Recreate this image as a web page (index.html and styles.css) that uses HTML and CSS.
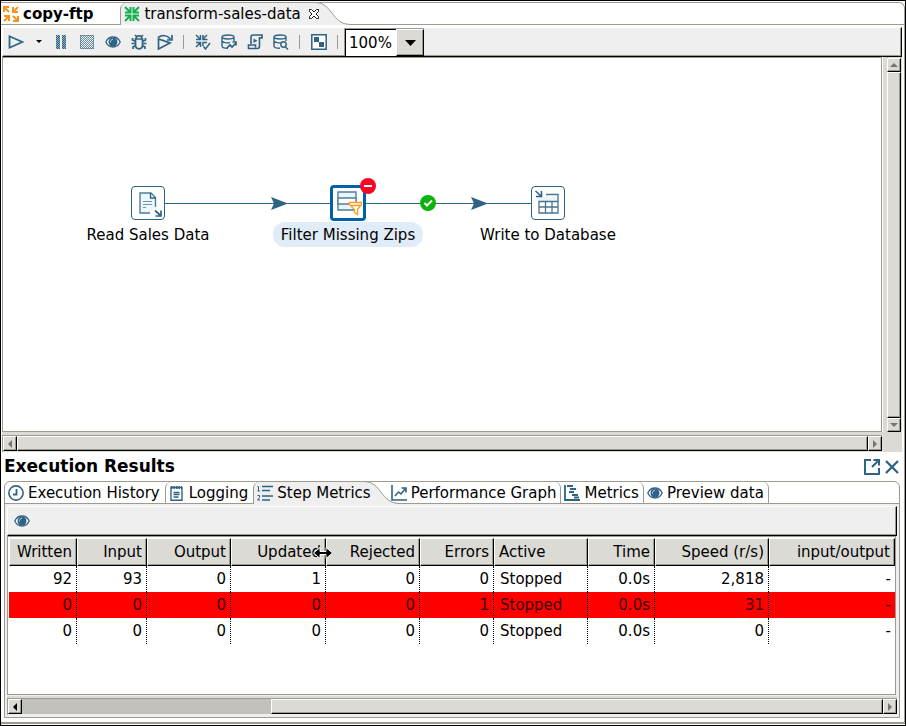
FILE: index.html
```html
<!DOCTYPE html>
<html lang="en">
<head>
<meta charset="utf-8">
<title>transform-sales-data</title>
<link rel="stylesheet" href="styles.css">
</head>
<body>
<svg class="defs" aria-hidden="true">
  <defs>
    <pattern id="dither" width="2" height="2" patternUnits="userSpaceOnUse"><path fill="#2f6383" d="M0 0h1v1H0zM1 1h1v1H1z"/></pattern>
    <symbol id="eye" viewBox="0 0 16 16"><path fill="#fff" stroke="#2f6383" stroke-width="1.300" d="M.8 8C2.500 4.500 5 3 8 3s5.500 1.500 7.200 5C13.500 11.500 11 13 8 13S2.500 11.500.8 8z"/><circle cx="8" cy="8" r="4.500" fill="#2f6383"/><path fill="none" stroke="#b9d3e0" d="M5.500 8.500C5.500 6.500 6.200 5.500 8 5.200"/></symbol>
    <symbol id="in-arrows" viewBox="0 0 16 16"><path fill="none" stroke="currentColor" stroke-width="2" d="M1 1l5 5M15 1l-5 5M1 15l5-5M15 15l-5-5M6.500 1v5.500H1M9.500 1v5.500H15M1 9.500h5.500V15M15 9.500H9.500V15"/></symbol>
    <symbol id="cylinder" viewBox="0 0 16 16"><path fill="none" stroke="#2f6383" stroke-width="1.400" d="M1 3v9c0 1.500 2.500 2.200 6 2.200M13 7V3M1 7.300c1 1.300 4 1.800 8 1.300M1 3c0-1.300 2.500-2 6-2s6 .7 6 2-2.500 2-6 2-6-.7-6-2z"/></symbol>
    <symbol id="left" viewBox="0 0 12 12"><path fill="currentColor" d="M8 2v8L4 6z"/></symbol>
    <symbol id="right" viewBox="0 0 12 12"><path fill="currentColor" d="M4 2v8l4-4z"/></symbol>
    <symbol id="up" viewBox="0 0 12 12"><path fill="currentColor" d="M2 8h8L6 4z"/></symbol>
    <symbol id="down" viewBox="0 0 12 12"><path fill="currentColor" d="M2 4h8L6 8z"/></symbol>
    <symbol id="curve" viewBox="0 0 36 23"><path fill="#efefef" d="M0 .5h2C18 .5 18 22.500 36 22.500V23H0z"/><path fill="none" stroke="#9e9a90" d="M0 .5h2C18 .5 18 22.500 36 22.500"/></symbol>
  </defs>
</svg>
<div class="window">
  <div class="tabs file-tabs" role="tablist">
    <button class="tab file" role="tab"><svg class="icon orange" viewBox="0 0 16 16"><path fill="none" stroke="currentColor" stroke-width="2" d="M1 6V1h5M1 1l5 5M10 1v5h5M15 1l-5 5M6 15v-5H1M1 15l5-5M15 10v5h-5M15 15l-5-5"/></svg>copy-ftp</button>
    <button class="tab selected left-edge" role="tab" aria-selected="true"><svg class="icon green"><use href="#in-arrows"/></svg>transform-sales-data<svg class="close" viewBox="0 0 12 12"><path fill="#fff" stroke="#222" d="M1.500 1.500h2L6 4l2.500-2.500h2v2L8 6l2.500 2.500v2h-2L6 8l-2.500 2.500h-2v-2L4 6 1.500 3.500z"/></svg></button>
    <svg class="curve"><use href="#curve"/></svg>
  </div>
  <div class="toolbar" role="toolbar">
    <button class="tool" aria-label="Run"><svg class="icon" viewBox="0 0 16 16"><path fill="none" stroke="#2f6383" stroke-width="1.800" d="M1.500 2.300v11.400L14.500 8z"/></svg></button>
    <button class="tool menu" aria-label="Run options"><svg class="icon" viewBox="0 0 16 16"><path d="M5 6h6L8 9z"/></svg></button>
    <button class="tool" aria-label="Pause"><svg class="icon" viewBox="0 0 16 16"><path fill="#93abb9" d="M3 1h4v14H3zM9 1h4v14H9z"/><path fill="url(#dither)" d="M3 1h4v14H3zM9 1h4v14H9z"/></svg></button>
    <button class="tool" aria-label="Stop"><svg class="icon" viewBox="0 0 16 16"><path fill="url(#dither)" opacity=".7" d="M1 1h14v14H1z"/><path fill="none" stroke="#2f6383" stroke-dasharray="1 1" d="M1.500 1.500h13v13h-13z"/></svg></button>
    <button class="tool" aria-label="Preview"><svg class="icon"><use href="#eye"/></svg></button>
    <button class="tool" aria-label="Debug"><svg class="icon" viewBox="0 0 16 16"><g fill="none" stroke="#2f6383" stroke-width="1.700"><path d="M4.500 5h7v6c0 2.500-1.500 3.800-3.500 3.800S4.500 13.500 4.500 11zM5.200 5C5 2.500 6.500 1.800 8 1.800S11 2.500 10.800 5M4 1l2 2M12 1l-2 2M4.500 7.500L1.500 6V4M11.500 7.500l3-1.500V4M4.500 9.500H.5M11.500 9.500h4M4.700 11.500L2 13v2M11.300 11.500L14 13v2"/></g></svg></button>
    <button class="tool" aria-label="Replay"><svg class="icon" viewBox="0 0 16 16"><path fill="none" stroke="#2f6383" stroke-width="1.700" d="M1.500 5v10L13 9zM1 3.500C5 .8 10 1 13.500 5M15 1v5h-5"/></svg></button>
    <span class="separator"></span>
    <button class="tool" aria-label="Verify"><svg class="icon" viewBox="0 0 16 16"><path fill="none" stroke="#2f6383" stroke-width="1.500" d="M1 1l4 4M12 1L8 5M1 13l4-4M5.500 1v4.500H1M8 1v4.500h4.500M1 8.500h4.500V13M8 12V8.500h4M8.500 12.500l2 2.500 4.500-6"/></svg></button>
    <button class="tool" aria-label="Impact"><svg class="icon" viewBox="0 0 16 16"><use href="#cylinder"/><path fill="none" stroke="#2f6383" stroke-width="1.700" d="M6 14l3-3 2 2 4-4M11.500 8H15v3.500"/></svg></button>
    <button class="tool" aria-label="SQL"><svg class="icon" viewBox="0 0 16 16"><path fill="none" stroke="#2f6383" stroke-width="1.600" d="M4 10V3c0-1.300.6-2 2-2h9v3h-2.500M12.500 3v9c0 1.800-.8 2.500-2 2.500H1.500V11h7v2.500"/><path fill="#2f6383" d="M6.500 4.500v4.500l4-2.300z"/></svg></button>
    <button class="tool" aria-label="Explore database"><svg class="icon" viewBox="0 0 16 16"><use href="#cylinder"/><path fill="none" stroke="#2f6383" stroke-width="1.500" d="M12.500 13l2.500 2.500"/><circle cx="10.500" cy="10.500" r="2.700" fill="#efefef" stroke="#2f6383" stroke-width="1.400"/></svg></button>
    <span class="separator"></span>
    <button class="tool" aria-label="Show results"><svg class="icon" viewBox="0 0 16 16"><path fill="#fff" stroke="#2f6383" stroke-width="1.500" d="M.8.8h14.400v14.400H.8z"/><path fill="#2f6383" d="M3 3h5v5H3zM8 8h5v5H8z"/></svg></button>
    <span class="separator"></span>
    <span class="combo"><select aria-label="Zoom"><option>100%</option></select><span class="drop"><svg viewBox="0 0 12 12"><path d="M1 3h11L6.500 9z"/></svg></span></span>
  </div>
  <div class="editor">
    <main class="canvas">
      <svg class="links"><path stroke="#2f6383" d="M162 145.500h166M362 145.500h166"/><path fill="#2f6383" d="M268 139l17 6.500-17 6.500 3-6.500zM468 139l17 6.500-17 6.500 3-6.500z"/><circle cx="425" cy="145" r="8" fill="#0ab40a"/><path fill="none" stroke="#fff" stroke-width="2" d="M421.500 145l2.500 2.500 5-5"/></svg>
      <div class="node read"><div class="box"><svg viewBox="0 0 32 32"><path fill="#edf7fb" stroke="#4c7d9a" stroke-width="1.400" d="M18 26H8V6h11l4.500 4.500V20"/><path fill="none" stroke="#2f6383" stroke-width="1.300" d="M18.500 6v5H24"/><path stroke="#6d98ae" d="M11 14.500h9M11 17.500h9M11 20.500h3"/><path fill="none" stroke="#2f6383" stroke-width="1.700" d="M23 23.500l5.500 5M29 23.500v5.500h-5.500"/></svg></div><span class="label">Read Sales Data</span></div>
      <div class="node filter"><div class="box active"><svg viewBox="0 0 32 32"><path fill="#e9f5fa" stroke="#527f9a" stroke-width="1.400" d="M6 5h18v18H6z"/><path fill="#fff" stroke="#527f9a" stroke-width="1.300" d="M6 11h18v6H6z"/><path fill="#fff" stroke="#f99d1c" stroke-width="1.300" d="M17.500 15.500h12v2l-4 5v5l-3-2v-3l-5-5zM19 18.500h9"/></svg></div><svg class="badge" viewBox="0 0 16 16"><circle cx="8" cy="8" r="8" fill="#ff0026"/><path stroke="#fff" stroke-width="2" d="M4 8h8"/></svg><span class="label">Filter Missing Zips</span></div>
      <div class="node write"><div class="box"><svg viewBox="0 0 32 32"><path fill="#e9f5fa" d="M7 10h19v5H7z"/><path fill="none" stroke="#47758f" stroke-width="1.300" d="M14 7.500h12V26H7V14.500h19M7 20h19M13.500 15v11M20 15v11"/><path fill="none" stroke="#2f6383" stroke-width="1.600" d="M3.500 4l5.500 5M9.500 4v5.500H4"/></svg></div><span class="label">Write to Database</span></div>
    </main>
    <div class="scrollbar vertical"><button class="step" aria-label="Scroll up"><svg><use href="#up"/></svg></button><div class="thumb"></div><button class="step" aria-label="Scroll down"><svg><use href="#down"/></svg></button></div>
    <div class="scrollbar horizontal"><button class="step" aria-label="Scroll left"><svg><use href="#left"/></svg></button><div class="thumb"></div><button class="step" aria-label="Scroll right"><svg><use href="#right"/></svg></button></div>
    <div class="corner"></div>
  </div>
  <section class="results">
    <header class="heading"><h2>Execution Results</h2>
      <button class="action" aria-label="Maximize"><svg class="icon" viewBox="0 0 16 16"><path fill="none" stroke="#2f6383" stroke-width="2" d="M7 1H1v14h14V9M8 8l6.500-6.500M9.500 1H15v5.500"/></svg></button>
      <button class="action" aria-label="Close"><svg class="icon" viewBox="0 0 16 16"><path stroke="#2f6383" stroke-width="2.300" d="M2 2l12 12M14 2L2 14"/></svg></button>
    </header>
    <div class="folder">
      <div class="tabs" role="tablist">
        <button class="tab" role="tab"><svg class="icon" viewBox="0 0 16 16"><circle cx="8" cy="8" r="7.100" fill="none" stroke="#2f6383" stroke-width="1.600"/><path fill="none" stroke="#2f6383" stroke-width="1.800" d="M8.500 4v5.500H5"/></svg>Execution History</button>
        <button class="tab left-edge" role="tab"><svg class="icon" viewBox="0 0 16 16"><path fill="none" stroke="#2f6383" stroke-width="1.400" d="M2 2.500h11v12.700H2zM4.500 7.500h6M4.500 9.500h6M4.500 12h5"/><path stroke="#2f6383" stroke-width="3" stroke-dasharray="1.500 1" d="M2 2.500h11"/></svg>Logging</button>
        <button class="tab selected left-edge" role="tab" aria-selected="true"><svg class="icon" viewBox="0 0 16 16"><path fill="none" stroke="#2f6383" d="M.5 1.500h1V6M.5 6h2.500M.5 10.500h2v2l-2 2.500H3"/><path stroke="#2f6383" stroke-width="1.300" d="M5 1.500h11M5 5.500h8M5 11h11M5 15h8"/></svg>Step Metrics</button>
        <svg class="curve"><use href="#curve"/></svg>
        <button class="tab right-edge after-curve" role="tab"><svg class="icon" viewBox="0 0 16 16"><path fill="none" stroke="#2f6383" stroke-width="1.600" d="M1 0v15h15M4 11l3.500-4 2.500 2 4-5M10.500 3H15v4.500"/></svg>Performance Graph</button>
        <button class="tab right-edge" role="tab"><svg class="icon" viewBox="0 0 16 16"><path fill="none" stroke="#2f6383" stroke-width="1.800" d="M1 0v15h15M3 1h6M6 4h6M5 7h5M8 10h6M10 12.500h5"/></svg>Metrics</button>
        <button class="tab right-edge" role="tab"><svg class="icon"><use href="#eye"/></svg>Preview data</button>
      </div>
      <div class="content">
        <div class="toolbar"><button class="tool preview" aria-label="Preview rows"><svg class="icon"><use href="#eye"/></svg></button></div>
        <div class="grid">
          <table>
            <colgroup><col class="w68"><col class="w70"><col class="w84"><col class="w95"><col class="w94"><col class="w74"><col class="w94"><col class="w67"><col class="w114"><col></colgroup>
            <thead><tr><th>Written</th><th>Input</th><th>Output</th><th class="resizing">Updated<svg class="cursor" viewBox="0 0 20 12"><path stroke="#fff" stroke-width="1" d="M.5 6L7 .5v4h6v-4L19.500 6 13 11.500v-4H7v4z"/></svg></th><th>Rejected</th><th>Errors</th><th class="text">Active</th><th>Time</th><th>Speed (r/s)</th><th>input/output</th></tr></thead>
            <tbody>
              <tr><td>92</td><td>93</td><td>0</td><td>1</td><td>0</td><td>0</td><td class="text">Stopped</td><td>0.0s</td><td>2,818</td><td>-</td></tr>
              <tr class="failed"><td>0</td><td>0</td><td>0</td><td>0</td><td>0</td><td>1</td><td class="text">Stopped</td><td>0.0s</td><td>31</td><td>-</td></tr>
              <tr><td>0</td><td>0</td><td>0</td><td>0</td><td>0</td><td>0</td><td class="text">Stopped</td><td>0.0s</td><td>0</td><td>-</td></tr>
            </tbody>
          </table>
        </div>
        <div class="scrollbar horizontal scrolled"><button class="step enabled" aria-label="Scroll left"><svg><use href="#left"/></svg></button><div class="trough"></div><div class="thumb"></div><button class="step" aria-label="Scroll right"><svg><use href="#right"/></svg></button></div>
      </div>
    </div>
  </section>
</div>
</body>
</html>
```
FILE: styles.css
```css
:root {
  --line: #9e9a90;
  --face: #dbdad5;
  --panel: #efefef;
  --blue: #2f6383;
}
* { box-sizing: border-box; }
body {
  margin: 0;
  min-height: 100vh;
  display: flex;
  border: 1px solid #000;
  background: #fff;
  color: #000;
  font: 15px "DejaVu Sans", sans-serif;
}
button {
  margin: 0;
  padding: 0;
  border: 0;
  background: none;
  color: inherit;
  font: inherit;
}
svg { display: block; flex: none; }
.defs { position: absolute; width: 0; height: 0; }
.icon { width: 16px; height: 16px; }
.orange { color: #f7941d; }
.green { color: #12b04c; }

.window {
  flex: 1;
  min-width: 0;
  display: flex;
  flex-direction: column;
  margin: 1px 0;
  border: solid var(--line);
  border-width: 1px 1px 2px 0;
  border-top-right-radius: 6px;
}

/* Tab strips */
.tabs {
  display: flex;
  height: 22px;
  border-bottom: 1px solid var(--line);
}
.tab {
  display: flex;
  align-items: center;
  gap: 4px;
  height: 21px;
  padding: 0 5px 0 3px;
  white-space: nowrap;
}
.tab.file { padding: 0 27px 0 2px; font-weight: bold; }
.left-edge { border-left: 1px solid var(--line); border-top-left-radius: 6px; }
.tab.right-edge { padding: 0 4px 0 3px; border-right: 1px solid var(--line); border-top-right-radius: 6px; }
/* The fill stops short of the edge so that the curved flank shows behind the text */
.tab.selected {
  position: relative;
  z-index: 1;
  height: 22px;
  padding-right: 0;
  background: linear-gradient(var(--panel), var(--panel)) 0 0 / calc(100% - 6px) 100% no-repeat;
}
.curve { width: 36px; height: 23px; margin-top: -1px; margin-left: -6px; }
.folder .curve { margin-left: -8px; }
.after-curve { margin-left: -11px; }
.close { width: 12px; height: 12px; margin-left: 3px; }

/* Toolbars */
.toolbar {
  display: flex;
  align-items: center;
  height: 30px;
  margin: 2px 2px 0 1px;
  border: 1px solid #fff;
  border-right-color: #000;
  border-bottom-color: #000;
  background: var(--panel);
  box-shadow: inset -1px -1px var(--line);
}
.tool { display: grid; place-items: center; width: 26px; height: 28px; }
.tool.menu { width: 19px; }
.separator { width: 12px; height: 14px; border-left: 1px solid var(--line); margin-left: 5px; margin-right: -5px; }
.combo { display: flex; width: 80px; height: 28px; border: 1px solid var(--line); border-width: 1px 0 0 1px; }
.combo select {
  flex: 1;
  min-width: 0;
  padding: 0 0 0 3px;
  border: solid #000;
  border-width: 1px 0 0 1px;
  border-radius: 0;
  appearance: none;
  background: #fff;
  color: #000;
  font: inherit;
}
.drop {
  display: grid;
  place-items: center;
  width: 28px;
  background: var(--face);
  border: 1px solid #fff;
  border-right-color: #000;
  border-bottom-color: #000;
  box-shadow: inset -1px -1px var(--line);
}
.drop svg { width: 12px; height: 12px; }

/* Editor */
.editor {
  flex: 1;
  display: grid;
  grid-template-columns: 1fr 20px;
  grid-template-rows: 1fr 20px;
  margin: 0 2px 0 1px;
}
.canvas { position: relative; border: 1px solid var(--line); overflow: hidden; }
.links { position: absolute; inset: 0; width: 100%; height: 100%; }
.node {
  position: absolute;
  top: 127px;
  width: 160px;
  display: flex;
  flex-direction: column;
  align-items: center;
}
.read { left: 65px; }
.filter { left: 265px; }
.write { left: 465px; }
.box { width: 34px; height: 34px; margin: 1px; border: 1px solid var(--blue); border-radius: 4px; background: #fff; }
.box svg { width: 32px; height: 32px; }
.box.active { width: 36px; height: 36px; margin: 0; padding: 0; border: 3px solid #0060a8; }
.box.active svg { margin: -1px; }
.badge { position: absolute; top: -7px; left: 92px; width: 16px; height: 16px; }
.label { margin-top: 1px; padding: 2px 8px 0; line-height: 23px; border-radius: 12px; white-space: nowrap; }
.filter .label { background: #e0ecf7; }

/* Scrollbars */
.scrollbar { display: flex; background: var(--face); }
.scrollbar .step { display: grid; place-items: center; color: #77756f; }
.scrollbar .step, .thumb {
  border: 1px solid #fff;
  border-right-color: #000;
  border-bottom-color: #000;
  background: var(--face);
  box-shadow: inset -1px -1px var(--line);
}
.step svg { width: 12px; height: 12px; }
.thumb { flex: 1; }
.vertical { flex-direction: column; border-left: 1px solid #fff; padding: 1px 1px 0 4px; box-shadow: inset 4px 0 var(--face), inset 5px 0 var(--line); }
.vertical .step { height: 14px; }
.horizontal { padding: 4px 0 1px 1px; box-shadow: inset 0 3px var(--face), inset 0 4px var(--line), inset 1px 0 var(--line); }
.horizontal .step { width: 14px; }
.corner { background: var(--face); }
.scrolled { height: 19px; padding-top: 3px; background: var(--panel); box-shadow: inset 0 2px var(--face), inset 0 3px var(--line), inset 1px 0 var(--line); }
.scrolled .step.enabled { color: #000; }
.trough { width: 28%; background: #c3c1bb; }

/* Execution results */
.results { margin: 0 4px 4px 3px; }
.heading { display: flex; align-items: center; gap: 4px; height: 29px; }
h2 { flex: 1; margin: 0; font-size: 17px; line-height: 29px; }
.folder { border: 1px solid var(--line); border-radius: 6px 6px 0 0; }
.content { padding: 2px; background: var(--panel); }
.content .toolbar { margin: 0; }
.tool.preview { width: 28px; }
.grid { min-height: 159px; margin: 0 1px 1px 0; padding: 1px 0 0 1px; border: 1px solid var(--line); background: #fff; }
table { width: 100%; table-layout: fixed; border-collapse: separate; border-spacing: 0; }
.w67 { width: 67px; }
.w68 { width: 68px; }
.w70 { width: 70px; }
.w74 { width: 74px; }
.w84 { width: 84px; }
.w94 { width: 94px; }
.w95 { width: 95px; }
.w114 { width: 114px; }
th, td { padding: 0 4px; text-align: right; font-weight: normal; white-space: nowrap; }
th {
  height: 28px;
  border: 1px solid #fff;
  border-right-color: #000;
  border-bottom-color: #000;
  background: var(--face);
  box-shadow: inset -1px -1px var(--line);
}
td { height: 26px; border-right: 1px dotted #000; }
td:last-child { border-right: 0; }
.text { text-align: left; }
td.text { padding-left: 6px; }
.failed td { background: #f00; color: #300; }
.resizing { position: relative; }
.cursor { position: absolute; right: -8px; top: 8px; z-index: 1; width: 20px; height: 12px; }
```
